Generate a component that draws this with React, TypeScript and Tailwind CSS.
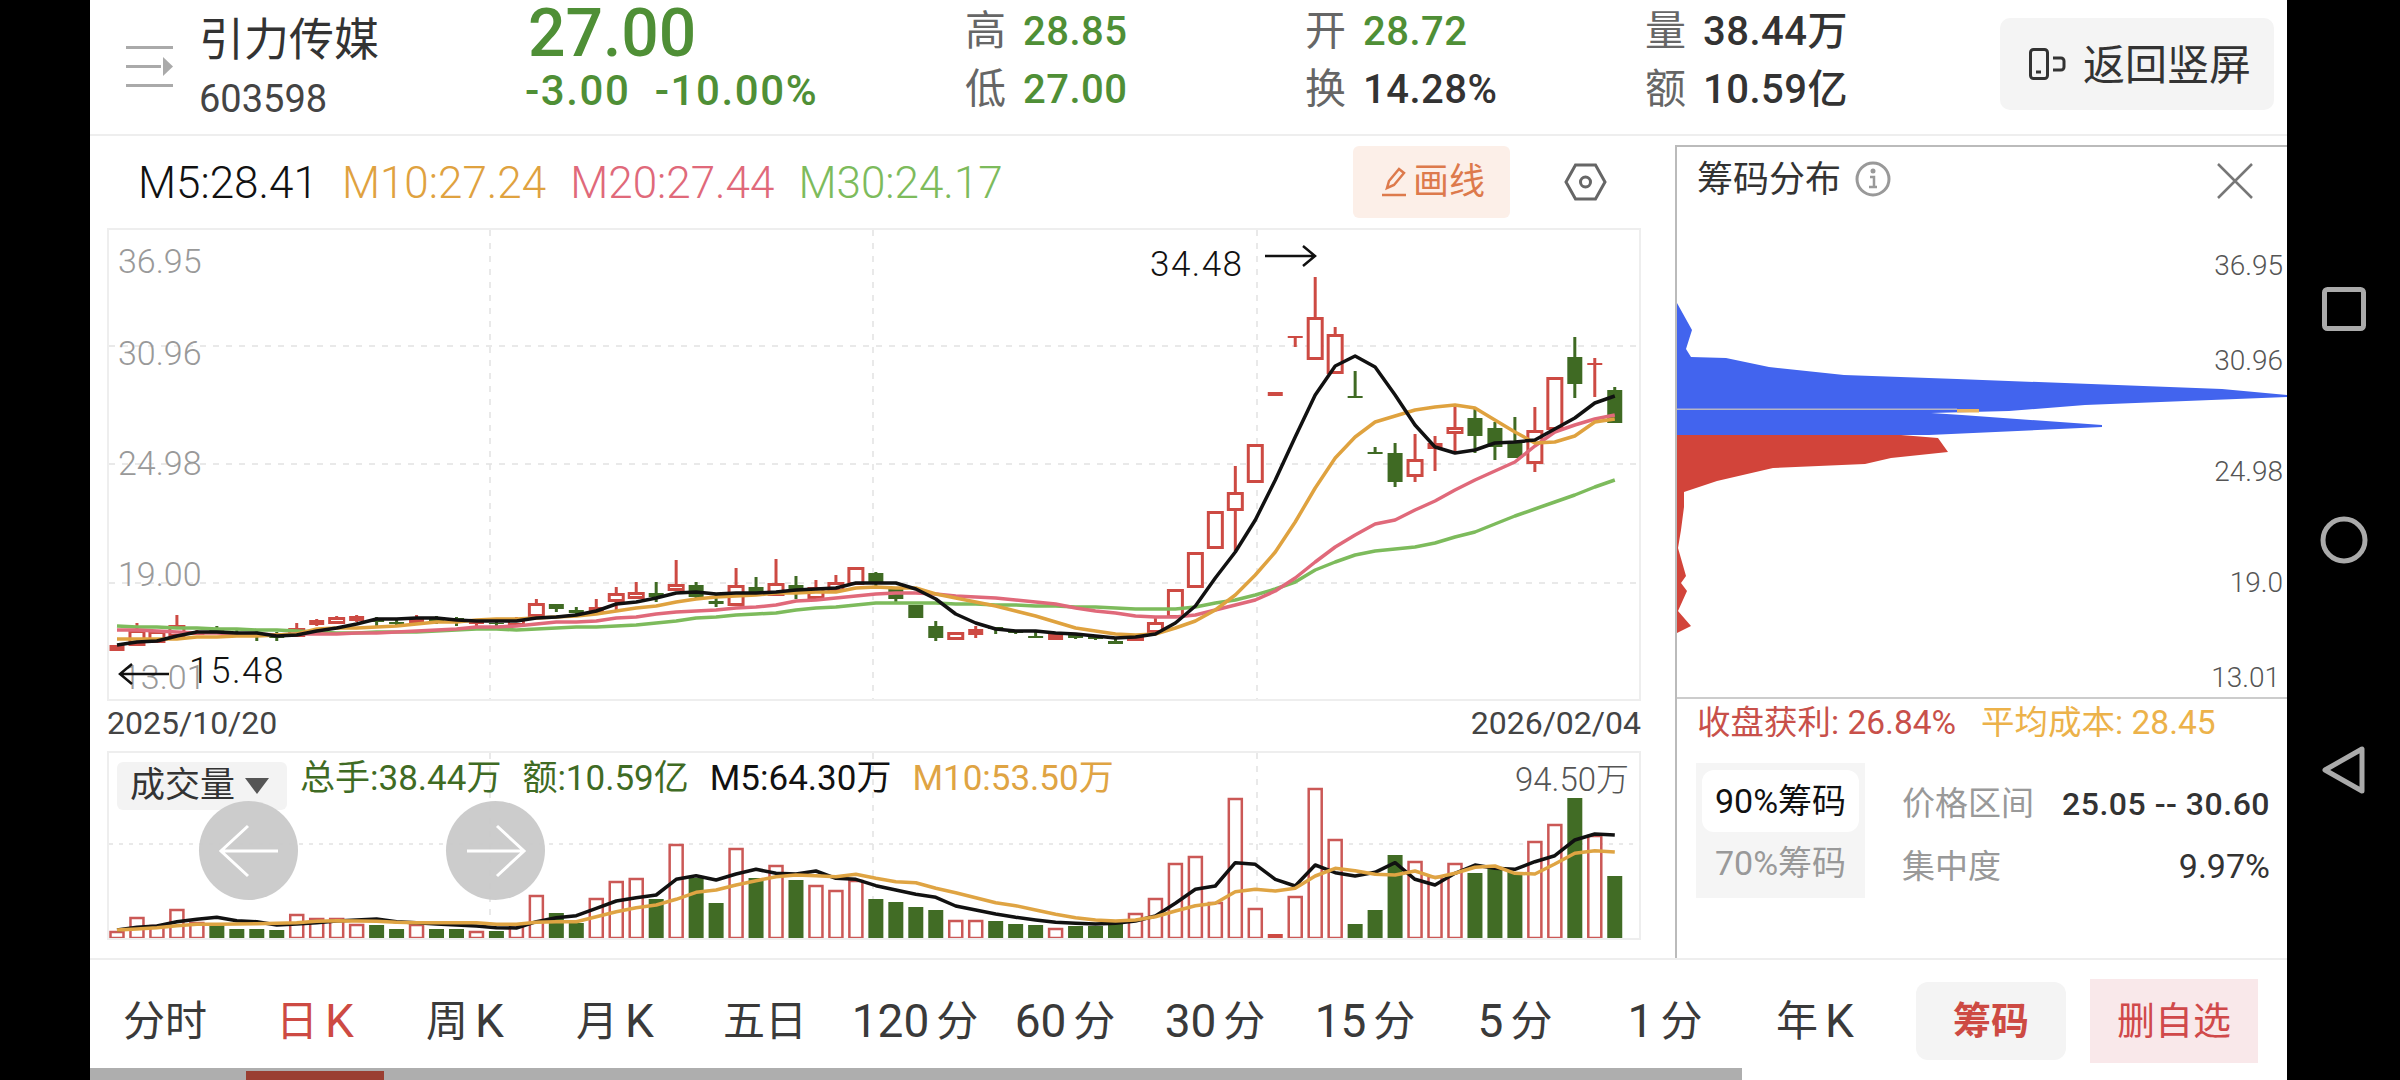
import React from "react";

type Candle = [string, number, number, number, number];

// type, high, body top, body bottom, low (page y)
const candles: Candle[] = [
  ["u",645,645,651,651],["u",623,630,646,646],["u",630,631,643,643],["u",615,625,637,637],["u",630,631,635,635],
  ["d",626,630,632,634],["d",630,632,633,634],["d",630,633,635,641],["d",632,636,638,641],["u",623,628,637,637],
  ["u",619,620,625,626],["u",616,617,624,624],["u",615,616,621,622],["d",617,619,622,626],["d",619,622,624,626],
  ["u",615,617,623,623],["d",616,618,623,624],["d",617,618,623,626],["u",621,622,624,627],["d",621,623,624,626],
  ["u",617,619,626,627],["u",599,603,617,617],["d",604,604,609,612],["d",607,610,613,614],["u",599,607,613,613],
  ["u",587,593,602,611],["u",582,592,599,599],["d",582,593,597,602],["u",560,584,591,591],["d",582,585,597,599],
  ["d",595,601,604,607],["u",568,585,606,606],["d",577,587,593,596],["u",559,583,596,596],["d",576,585,594,599],
  ["u",580,587,599,599],["u",575,582,592,592],["u",567,567,585,585],["d",572,573,583,587],["d",588,588,599,602],
  ["d",605,605,618,618],["d",621,626,638,641],["u",632,632,640,640],["u",626,629,635,638],["d",627,627,629,634],
  ["d",630,631,633,634],["d",632,636,638,638],["u",634,634,640,640],["d",634,634,638,639],["d",636,636,639,640],
  ["d",637,641,644,644],["u",634,634,641,641],["u",617,622,633,633],["u",589,589,618,618],["u",552,552,588,588],
  ["u",511,511,549,549],["u",466,492,511,551],["u",444,444,483,483],["u",392,392,396,396],["u",336,336,338,347],
  ["u",277,317,360,360],["u",327,334,374,374],["d",371,396,398,398],["d",447,452,454,454],["d",443,453,482,487],
  ["u",434,459,477,482],["u",436,443,449,471],["u",406,427,434,453],["d",408,418,436,453],["d",422,428,447,460],
  ["d",417,443,458,458],["u",407,430,464,472],["u",377,377,430,430],["d",337,357,384,398],["u",358,363,365,397],
  ["d",387,390,423,423],
];

const m5 = [645,642,641,636,632,632,633,633,636,635,631,628,624,619,619,618,618,620,621,621,621,618,617,615,611,604,602,598,593,592,594,593,593,592,590,589,588,583,583,583,589,599,614,623,629,631,631,633,634,636,638,637,634,623,606,578,552,520,480,437,395,366,356,367,395,425,447,453,450,443,442,440,429,418,403,396];
const m10 = [639,639,639,639,637,637,636,636,635,634,629,628,628,627,626,624,622,622,620,619,619,618,617,616,614,611,608,606,602,599,597,596,595,593,593,592,592,588,587,588,588,594,598,602,606,611,616,622,628,631,634,635,634,628,621,610,595,575,552,522,488,458,437,422,416,410,407,405,408,420,432,443,442,436,422,419];
const m20 = [630,630,631,632,633,633,634,634,635,634,634,634,633,633,632,631,630,629,627,627,626,624,622,622,621,618,617,614,612,611,610,608,607,605,601,600,598,596,594,593,593,594,596,597,598,600,602,604,608,611,613,616,617,617,615,610,605,600,591,578,562,547,535,524,520,510,501,490,480,471,462,446,432,425,419,415];
const m30 = [626,627,627,628,628,629,629,630,630,631,632,633,633,632,632,632,631,630,629,629,630,629,628,627,627,626,625,623,621,618,617,615,614,613,610,608,607,605,603,603,603,603,604,604,605,605,606,606,607,607,608,609,609,609,607,603,600,595,589,582,570,562,555,551,549,547,543,537,532,524,516,509,502,495,487,480];

// type, bar height (px)
const volumes: [string, number][] = [
  ["u",7],["u",21],["u",13],["u",29],["u",16],["d",13],["d",9],["d",9],["d",8],["u",24],["u",20],["u",20],["u",14],["d",13],["d",9],["u",14],["d",9],["d",9],["u",7],["d",7],
  ["u",14],["u",43],["d",25],["d",15],["u",40],["u",57],["u",60],["d",39],["u",94],["d",60],["d",35],["u",90],["d",60],["u",73],["d",58],["u",53],["u",48],["u",58],["d",39],["d",36],
  ["d",31],["d",28],["u",18],["u",18],["d",17],["d",14],["d",13],["u",10],["d",12],["d",12],["d",14],["u",25],["u",40],["u",75],["u",82],["u",36],["u",140],["u",30],["s",4],["u",42],
  ["u",150],["u",99],["d",14],["d",28],["d",83],["u",77],["u",62],["u",75],["d",65],["d",70],["d",66],["u",97],["u",114],["d",140],["u",103],["d",62],
];

const volM5 = [570,562,558,545,538,532,542,545,555,552,548,543,540,537,545,548,552,555,558,563,564,545,533,527,505,483,473,465,418,407,420,402,388,400,402,393,415,418,437,450,463,472,498,510,522,532,540,547,550,552,550,543,528,490,448,438,368,373,418,438,375,398,408,397,368,418,435,400,375,385,388,365,347,300,282,285];
const volM10 = [570,567,563,557,553,553,552,551,550,548,544,542,543,544,547,548,548,548,548,553,553,547,545,545,530,515,503,495,478,457,450,435,422,410,405,407,410,403,415,425,428,445,458,473,488,497,510,523,533,540,543,540,530,513,497,490,455,448,453,445,408,385,392,403,405,393,413,400,382,378,400,402,372,340,332,336];

const xAt = (i: number) => 117 + i * 19.97;
const linePoints = (ys: number[]) => ys.map((y, i) => `${xAt(i).toFixed(1)},${y}`).join(" ");
const volPoints = (ys: number[]) => ys.map((y, i) => `${xAt(i).toFixed(1)},${(740 + y / 3).toFixed(1)}`).join(" ");

const RED = "#cd4a43";
const GREEN = "#3f6a23";

function CandleMark({ c, i }: { c: Candle; i: number }) {
  const [type, high, top, bottom, low] = c;
  const x = xAt(i);
  const color = type === "u" ? RED : GREEN;
  const solid = type === "d" || bottom - top < 7;
  return (
    <g>
      <line x1={x} x2={x} y1={high} y2={low} stroke={color} strokeWidth={3} />
      {solid ? (
        <rect x={x - 7.5} y={top} width={15} height={bottom - top} fill={color} />
      ) : (
        <rect x={x - 7} y={top + 1.5} width={14} height={bottom - top - 3} fill="#fff" stroke={color} strokeWidth={3} />
      )}
    </g>
  );
}

function PriceChart() {
  return (
    <svg viewBox="109 230 1530 469" className="block h-full w-full">
      {[346, 464, 583].map((y) => (
        <line key={y} x1={109} x2={1639} y1={y} y2={y} stroke="#e2e2e2" strokeWidth={1.5} strokeDasharray="6 7" />
      ))}
      {[490, 873, 1257].map((x) => (
        <line key={x} x1={x} x2={x} y1={230} y2={699} stroke="#e2e2e2" strokeWidth={1.5} strokeDasharray="6 7" />
      ))}
      {candles.map((c, i) => (
        <CandleMark key={i} c={c} i={i} />
      ))}
      <polyline points={linePoints(m30)} fill="none" stroke="#7dbb5c" strokeWidth={3.5} strokeLinejoin="round" />
      <polyline points={linePoints(m20)} fill="none" stroke="#e0697a" strokeWidth={3.5} strokeLinejoin="round" />
      <polyline points={linePoints(m10)} fill="none" stroke="#dfa23f" strokeWidth={3.5} strokeLinejoin="round" />
      <polyline points={linePoints(m5)} fill="none" stroke="#111" strokeWidth={3.5} strokeLinejoin="round" />
    </svg>
  );
}

function VolumeChart() {
  return (
    <svg viewBox="109 753 1530 185" className="block h-full w-full">
      <line x1={109} x2={1639} y1={844} y2={844} stroke="#e2e2e2" strokeWidth={1.5} strokeDasharray="4 6" />
      {[490, 873, 1257].map((x) => (
        <line key={x} x1={x} x2={x} y1={753} y2={938} stroke="#e2e2e2" strokeWidth={1.5} strokeDasharray="6 7" />
      ))}
      {volumes.map(([type, h], i) => {
        const x = xAt(i);
        if (type === "d") return <rect key={i} x={x - 7.5} y={938 - h} width={15} height={h} fill="#416c25" />;
        if (type === "s") return <rect key={i} x={x - 7.5} y={938 - h} width={15} height={h} fill="#cd4a43" />;
        return <rect key={i} x={x - 6.5} y={938 - h + 1} width={13} height={h - 1} fill="#fff" stroke="#cb5856" strokeWidth={2.5} />;
      })}
      <polyline points={volPoints(volM5)} fill="none" stroke="#111" strokeWidth={3.5} strokeLinejoin="round" />
      <polyline points={volPoints(volM10)} fill="none" stroke="#dfa443" strokeWidth={3.5} strokeLinejoin="round" />
    </svg>
  );
}

function ChipChart() {
  return (
    <svg viewBox="1677 212 610 485" className="block h-full w-full">
      <polygon
        fill="#4264ee"
        points="1677,303 1692,330 1686,349 1691,357 1726,358 1769,367 1844,375 1957,379 2222,389 2287,395 2287,397 2085,405 2009,411 1931,413 1962,415 2102,425 2102,427 1929,435 1677,435"
      />
      <polygon
        fill="#d2443a"
        points="1677,435 1901,435 1938,438 1948,452 1891,458 1865,464 1773,468 1717,481 1684,492 1684,507 1681,530 1678,548 1686,576 1681,583 1687,591 1678,611 1691,626 1677,633"
      />
      <rect x={1677} y={408.5} width={280} height={1.5} fill="#b5b5c5" />
      <rect x={1957} y={409} width={22} height={3.5} fill="#e9b460" />
    </svg>
  );
}

function Stat({ label, value, green }: { label: string; value: string; green?: boolean }) {
  return (
    <div className="flex h-[58px] items-center gap-[16px]">
      <span className="w-[42px] text-[41px] text-[#666]">{label}</span>
      <span className={`text-[40px] font-medium tracking-[0.5px] ${green ? "text-[#4f8f36]" : "text-[#333]"}`}>{value}</span>
    </div>
  );
}

function Tab({ children, active }: { children: React.ReactNode; active?: boolean }) {
  return (
    <div className={`flex w-[150px] items-center justify-center text-[42px] ${active ? "text-[#cd4a43]" : "text-[#3a3a3a]"}`}>
      {children}
    </div>
  );
}

// digits and latin letters sit larger than the CJK glyphs on the tab row
function Big({ children, gap }: { children: React.ReactNode; gap?: boolean }) {
  return <span className={`text-[46px] leading-[50px] ${gap ? "ml-[7px]" : "mr-[7px]"}`}>{children}</span>;
}

export default function App() {
  return (
    <div className="flex h-[1080px] w-[2400px] overflow-hidden bg-black font-['Roboto','Noto_Sans_CJK_SC',sans-serif]">
      <div className="w-[90px] shrink-0" />

      <div className="flex w-[2197px] shrink-0 flex-col bg-white">
        {/* Header */}
        <div className="flex h-[136px] shrink-0 border-b-2 border-[#eeeeee]">
          <svg width="47" height="42" viewBox="0 0 47 42" className="ml-[36px] mt-[46px] shrink-0" fill="#aaa">
            <rect x="0" y="0" width="47" height="3" />
            <rect x="0" y="19" width="35" height="3" />
            <polygon points="37,11 47,20.5 37,30" />
            <rect x="0" y="38" width="47" height="3" />
          </svg>
          <div className="ml-[26px] flex w-[326px] shrink-0 flex-col">
            <span className="mt-[11px] text-[45px] leading-[60px] text-[#333]">引力传媒</span>
            <span className="mt-[6px] text-[38px] leading-[44px] text-[#444]">603598</span>
          </div>
          <div className="flex w-[440px] shrink-0 flex-col pt-[1px]">
            <span className="ml-[3px] text-[66px] font-medium leading-[66px] text-[#4f8f36]">27.00</span>
            <span className="-mt-[1px] whitespace-pre text-[42px] font-medium leading-[50px] tracking-[1.6px] text-[#4f8f36]">-3.00  -10.00%</span>
          </div>
          <div className="mt-[3px] flex w-[340px] shrink-0 flex-col">
            <Stat label="高" value="28.85" green />
            <Stat label="低" value="27.00" green />
          </div>
          <div className="mt-[3px] flex w-[340px] shrink-0 flex-col">
            <Stat label="开" value="28.72" green />
            <Stat label="换" value="14.28%" />
          </div>
          <div className="mt-[3px] flex w-[340px] shrink-0 flex-col">
            <Stat label="量" value="38.44万" />
            <Stat label="额" value="10.59亿" />
          </div>
          <div className="ml-[15px] mt-[18px] flex h-[92px] w-[274px] shrink-0 items-center gap-[17px] rounded-[10px] bg-[#f4f4f4] pl-[29px]">
            <svg width="37" height="32" viewBox="0 0 37 32" fill="none" stroke="#333" strokeWidth="3">
              <rect x="1.5" y="1.5" width="17" height="29" rx="3" />
              <path d="M7 24h5" />
              <path d="M24 10h8a3 3 0 0 1 3 3v6a3 3 0 0 1-3 3h-8" />
            </svg>
            <span className="mt-[3px] text-[42px] text-[#333]">返回竖屏</span>
          </div>
        </div>

        {/* Body */}
        <div className="flex h-[822px] shrink-0">
          <div className="flex w-[1585px] shrink-0 flex-col">
            <div className="flex h-[92px] shrink-0 items-start">
              <div className="flex w-[1263px] shrink-0 gap-[24px] pl-[48px] pt-[22px] text-[44px] font-light leading-[50px]">
                <span className="text-[#111]">M5:28.41</span>
                <span className="text-[#dfa23f]">M10:27.24</span>
                <span className="text-[#e0697a]">M20:27.44</span>
                <span className="text-[#7dbb5c]">M30:24.17</span>
              </div>
              <div className="mt-[10px] flex h-[72px] w-[157px] items-center justify-center gap-[6px] rounded-[6px] bg-[#fcefe8] pl-[3px] text-[36px] text-[#dd7a4c]">
                <svg width="26" height="30" viewBox="0 0 26 30" fill="none" stroke="#dd7a4c" strokeWidth="2.5">
                  <path d="M6 21 L8 14 L18 2 L23 6 L13 18 Z" />
                  <path d="M1 28h24" />
                </svg>
                <span>画线</span>
              </div>
              <svg width="43" height="38" viewBox="0 0 43 38" fill="none" stroke="#666" strokeWidth="3" className="ml-[54px] mt-[27px]">
                <path d="M2 19 L11.5 2 H31.5 L41 19 L31.5 36 H11.5 Z" />
                <circle cx="21.5" cy="19" r="5" />
              </svg>
            </div>

            <div className="relative ml-[17px] h-[473px] w-[1534px] shrink-0 border-2 border-[#eeeeee]">
              <PriceChart />
              <span className="absolute left-[9px] top-[11px] text-[34px] font-light leading-[40px] text-[#999]">36.95</span>
              <span className="absolute left-[9px] top-[103px] text-[34px] font-light leading-[40px] text-[#999]">30.96</span>
              <span className="absolute left-[9px] top-[213px] text-[34px] font-light leading-[40px] text-[#999]">24.98</span>
              <span className="absolute left-[9px] top-[324px] text-[34px] font-light leading-[40px] text-[#999]">19.00</span>
              <span className="absolute left-[13px] top-[427px] text-[34px] font-light leading-[40px] text-[#999]">13.01</span>
              <span className="absolute left-[80px] top-[419px] text-[36px] font-light leading-[44px] tracking-[1.5px] text-[#111]">15.48</span>
              <svg width="54" height="24" viewBox="0 0 54 24" fill="none" stroke="#111" strokeWidth="2.5" className="absolute left-[8px] top-[432px]">
                <path d="M52 12 H3 M15 2 L3 12 L15 22" />
              </svg>
              <span className="absolute left-[1041px] top-[13px] text-[35px] font-light leading-[44px] tracking-[1.5px] text-[#111]">34.48</span>
              <svg width="54" height="24" viewBox="0 0 54 24" fill="none" stroke="#111" strokeWidth="2.5" className="absolute left-[1155px] top-[14px]">
                <path d="M1 12 H51 M39 2 L51 12 L39 22" />
              </svg>
            </div>

            <div className="ml-[17px] flex h-[50px] w-[1534px] shrink-0 items-start justify-between pt-[3px] text-[32px] leading-[38px] text-[#444]">
              <span>2025/10/20</span>
              <span>2026/02/04</span>
            </div>

            <div className="relative ml-[17px] h-[189px] w-[1534px] shrink-0 border-2 border-[#eeeeee]">
              <VolumeChart />
              <div className="absolute left-[8px] top-[9px] flex h-[48px] w-[170px] items-center gap-[10px] rounded-[6px] bg-[#f3f3f3] pl-[13px] text-[35px] text-[#333]">
                <span>成交量</span>
                <span className="h-0 w-0 border-x-[12px] border-t-[16px] border-x-transparent border-t-[#555]" />
              </div>
              <div className="absolute left-[191px] top-[4px] flex gap-[21px] text-[35px] leading-[44px]">
                <span className="text-[#3f6b24]">总手:38.44万</span>
                <span className="text-[#3f6b24]">额:10.59亿</span>
                <span className="text-[#111]">M5:64.30万</span>
                <span className="text-[#dfa443]">M10:53.50万</span>
              </div>
              <span className="absolute right-[10px] top-[5px] text-[33px] font-light leading-[44px] text-[#555]">94.50万</span>
              <div className="absolute left-[90px] top-[48px] flex h-[99px] w-[99px] items-center justify-center rounded-full bg-[#c9c9c9]/95">
                <svg width="62" height="54" viewBox="0 0 62 54" fill="none" stroke="#fff" strokeWidth="3">
                  <path d="M60 27 H3 M30 2 L3 27 L30 52" />
                </svg>
              </div>
              <div className="absolute left-[337px] top-[48px] flex h-[99px] w-[99px] items-center justify-center rounded-full bg-[#c9c9c9]/95">
                <svg width="62" height="54" viewBox="0 0 62 54" fill="none" stroke="#fff" strokeWidth="3">
                  <path d="M2 27 H59 M32 2 L59 27 L32 52" />
                </svg>
              </div>
            </div>
          </div>

          {/* Chip panel */}
          <div className="mt-[9px] flex w-[612px] shrink-0 flex-col border-l-2 border-t-2 border-[#bbbbbb]">
            <div className="flex h-[65px] shrink-0 items-start">
              <span className="ml-[20px] mt-[11px] text-[36px] leading-[44px] text-[#333]">筹码分布</span>
              <svg width="36" height="36" viewBox="0 0 36 36" fill="none" className="ml-[14px] mt-[14px]">
                <circle cx="18" cy="18" r="16" stroke="#999" strokeWidth="3" />
                <circle cx="18" cy="10" r="2.5" fill="#999" />
                <path d="M15 16h4v10M14 26h8" stroke="#999" strokeWidth="2.5" />
              </svg>
              <svg width="38" height="38" viewBox="0 0 38 38" fill="none" stroke="#777" strokeWidth="2.5" className="ml-[325px] mt-[15px]">
                <path d="M2 2 L36 36 M36 2 L2 36" />
              </svg>
            </div>
            <div className="relative h-[487px] w-full shrink-0 border-b-2 border-[#cccccc]">
              <ChipChart />
              <span className="absolute right-[4px] top-[36px] text-[28px] font-light leading-[36px] text-[#555]">36.95</span>
              <span className="absolute right-[4px] top-[131px] text-[28px] font-light leading-[36px] text-[#555]">30.96</span>
              <span className="absolute right-[4px] top-[242px] text-[28px] font-light leading-[36px] text-[#555]">24.98</span>
              <span className="absolute right-[4px] top-[353px] text-[28px] font-light leading-[36px] text-[#555]">19.0</span>
              <span className="absolute right-[7px] top-[448px] text-[28px] font-light leading-[36px] text-[#555]">13.01</span>
            </div>
            <div className="flex h-[64px] shrink-0 items-start gap-[25px] pl-[20px] pt-[4px] text-[33.5px] leading-[40px]">
              <span className="text-[#c8504a]">收盘获利: 26.84%</span>
              <span className="text-[#ecb24a]">平均成本: 28.45</span>
            </div>
            <div className="flex shrink-0">
              <div className="ml-[19px] flex h-[135px] w-[169px] shrink-0 flex-col items-center bg-[#f5f5f5] pt-[7px]">
                <div className="flex h-[62px] w-[157px] items-center justify-center rounded-[12px] bg-white text-[34px] text-[#111]">90%筹码</div>
                <div className="flex h-[62px] items-center justify-center text-[34px] text-[#999]">70%筹码</div>
              </div>
              <div className="ml-[37px] flex w-[368px] shrink-0 flex-col pt-[9px] text-[33px]">
                <div className="flex h-[63px] items-center justify-between">
                  <span className="text-[#999]">价格区间</span>
                  <span className="text-[32px] font-medium tracking-[0.5px] text-[#333]">25.05 -- 30.60</span>
                </div>
                <div className="flex h-[63px] items-center justify-between">
                  <span className="text-[#999]">集中度</span>
                  <span className="text-[34px] text-[#333]">9.97%</span>
                </div>
              </div>
            </div>
          </div>
        </div>

        {/* Tabs */}
        <div className="flex h-[110px] shrink-0 items-center border-t-2 border-[#eeeeee] pt-[14px]">
          <Tab>分时</Tab>
          <Tab active>日<Big gap>K</Big></Tab>
          <Tab>周<Big gap>K</Big></Tab>
          <Tab>月<Big gap>K</Big></Tab>
          <Tab>五日</Tab>
          <Tab><Big>120</Big>分</Tab>
          <Tab><Big>60</Big>分</Tab>
          <Tab><Big>30</Big>分</Tab>
          <Tab><Big>15</Big>分</Tab>
          <Tab><Big>5</Big>分</Tab>
          <Tab><Big>1</Big>分</Tab>
          <Tab>年<Big gap>K</Big></Tab>
          <div className="ml-[26px] flex h-[78px] w-[150px] items-center justify-center rounded-[12px] bg-[#f4f4f4] text-[38px] font-bold text-[#cd4a43]">筹码</div>
          <div className="ml-[24px] flex h-[84px] w-[168px] items-center justify-center bg-[#f9e8ea] text-[38px] text-[#d0494a]">删自选</div>
        </div>

        {/* Scroll bar */}
        <div className="flex h-[12px] w-[1652px] shrink-0 items-end bg-[#aeaeae] pl-[156px]">
          <div className="h-[9px] w-[138px] bg-[#9a3f32]" />
        </div>
      </div>

      {/* Android nav */}
      <div className="flex w-[113px] shrink-0 flex-col items-center pt-[287px]">
        <svg width="44" height="44" viewBox="0 0 44 44" fill="none" stroke="#aaa" strokeWidth="5">
          <rect x="2.5" y="2.5" width="39" height="39" rx="3" />
        </svg>
        <svg width="48" height="48" viewBox="0 0 48 48" fill="none" stroke="#aaa" strokeWidth="5" className="mt-[185px]">
          <circle cx="24" cy="24" r="21" />
        </svg>
        <svg width="44" height="48" viewBox="0 0 44 48" fill="none" stroke="#aaa" strokeWidth="5" strokeLinejoin="round" className="mt-[182px]">
          <path d="M40 3 V45 L3 24 Z" />
        </svg>
      </div>
    </div>
  );
}
